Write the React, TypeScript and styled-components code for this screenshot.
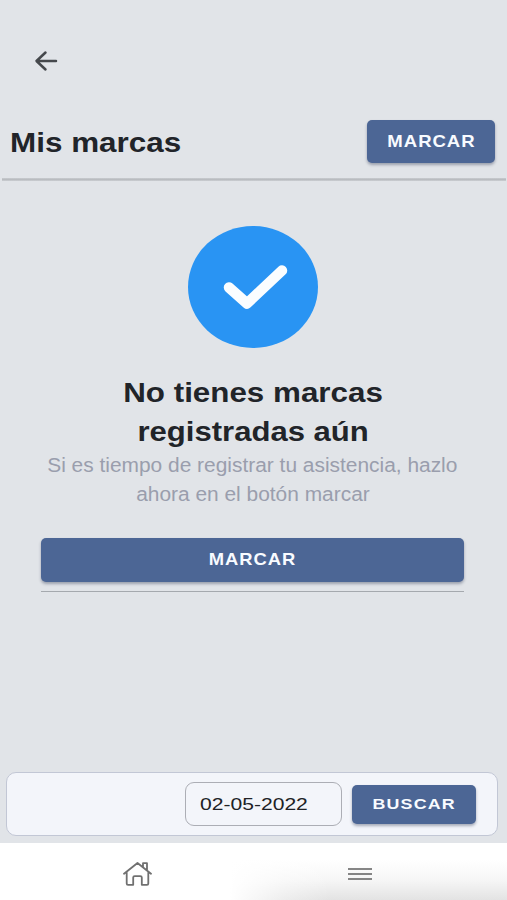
import React from 'react';
import styled, { createGlobalStyle } from 'styled-components';

const GlobalStyle = createGlobalStyle`
  * { box-sizing: border-box; }
  body {
    margin: 0;
    background: #e1e4e8;
    font-family: "Liberation Sans", Arial, sans-serif;
  }
`;

const Screen = styled.div`
  width: 507px;
  height: 900px;
  display: flex;
  flex-direction: column;
  overflow: hidden;
  background: #e1e4e8;
`;

const TopBar = styled.div`
  height: 106px;
  padding: 50px 0 0 34px;
`;

const BackButton = styled.button`
  display: block;
  padding: 0;
  border: 0;
  background: none;
  height: 22px;
`;

const Header = styled.header`
  height: 75px;
  margin: 0 1px 0 2px;
  padding: 0 11px 4px 8px;
  display: flex;
  align-items: center;
  justify-content: space-between;
  background: linear-gradient(#c9ccd0, #b9bcc0 50%, #cccfd3) bottom / 100% 3px no-repeat;
`;

const Wide = styled.span<{ $scale: number; $origin?: string }>`
  display: inline-block;
  white-space: nowrap;
  transform: scaleX(${(p) => p.$scale});
  transform-origin: ${(p) => p.$origin ?? 'center'};
`;

const Title = styled.h1`
  margin: 0;
  font-size: 28.5px;
  line-height: 40px;
  color: #212429;
`;

const Button = styled.button<{ $width: string; $height: number; $size: number; $spacing: number }>`
  display: flex;
  align-items: center;
  justify-content: center;
  width: ${(p) => p.$width};
  height: ${(p) => p.$height}px;
  flex-shrink: 0;
  padding: 0;
  border: 0;
  border-radius: 5px;
  background: #4c6695;
  color: #f8fbff;
  font: bold ${(p) => p.$size}px "Liberation Sans", Arial, sans-serif;
  letter-spacing: ${(p) => p.$spacing}px;
  box-shadow: 0 2px 3px rgba(40, 50, 80, 0.38);
`;

const Main = styled.main`
  flex: 1;
  display: flex;
  flex-direction: column;
  align-items: center;
  padding: 45px 43px 0 41px;
`;

const Heading = styled.h2`
  margin: 25px 0 0;
  padding-left: 1px;
  font-size: 28.5px;
  line-height: 39px;
  color: #212429;
  text-align: center;
`;

const Message = styled.p`
  margin: 0;
  font-size: 19.5px;
  line-height: 29px;
  color: #9a9ead;
  text-align: center;
`;

const Action = styled.div`
  width: 100%;
  margin-top: 29px;
  padding-bottom: 9px;
  border-bottom: 1px solid #a5a9ae;
`;

const SearchBar = styled.section`
  height: 64px;
  margin: 0 9px 7px 6px;
  padding-right: 21px;
  display: flex;
  align-items: center;
  justify-content: flex-end;
  gap: 10px;
  border: 1px solid #c2c7d5;
  border-radius: 10px;
  background: #f3f5fa;
`;

const DateField = styled.div`
  width: 157px;
  height: 44px;
  padding: 2px 0 0 14px;
  display: flex;
  align-items: center;
  border: 1px solid #acaeb5;
  border-radius: 9px;
  font-size: 17px;
  color: #202226;
`;

const BottomNav = styled.nav`
  height: 57px;
  flex-shrink: 0;
  padding: 0 36px 0 25px;
  display: grid;
  grid-template-columns: 1fr 1fr;
  justify-items: center;
  align-items: center;
  background:
    linear-gradient(to right, #fff 230px, rgba(255, 255, 255, 0.35) 285px, rgba(255, 255, 255, 0) 330px),
    linear-gradient(to bottom, #fff 30%, #f6f6f6 65%, #e3e3e3);
`;

const NavItem = styled.a`
  display: flex;
  padding-top: 4px;
`;

export default function App() {
  return (
    <>
      <GlobalStyle />
      <Screen>
        <TopBar>
          <BackButton aria-label="Volver">
            <svg width="24" height="22" viewBox="0 0 24 22" fill="none" stroke="#45484c" strokeWidth="2.5" strokeLinecap="round" strokeLinejoin="round">
              <path d="M11.5 2.5 2.5 11l9 8.5M3 11h19" />
            </svg>
          </BackButton>
        </TopBar>
        <Header>
          <Title><Wide $scale={1.103} $origin="left">Mis marcas</Wide></Title>
          <Button $width="128px" $height={43} $size={17} $spacing={0.9}>
            <Wide $scale={1.09}>MARCAR</Wide>
          </Button>
        </Header>
        <Main>
          <svg width="130" height="122" viewBox="0 0 130 122">
            <ellipse cx="65" cy="61" rx="65" ry="61" fill="#2994f3" />
            <path d="M41 61.5 59 77.5 94 44.5" fill="none" stroke="#fafdff" strokeWidth="10.5" strokeLinecap="round" strokeLinejoin="round" />
          </svg>
          <Heading>
            <Wide $scale={1.1}>No tienes marcas</Wide><br />
            <Wide $scale={1.09}>registradas aún</Wide>
          </Heading>
          <Message>
            <Wide $scale={1.072}>Si es tiempo de registrar tu asistencia, hazlo</Wide><br />
            <Wide $scale={1.072}>ahora en el botón marcar</Wide>
          </Message>
          <Action>
            <Button $width="100%" $height={44} $size={17} $spacing={0.9}>
              <Wide $scale={1.08}>MARCAR</Wide>
            </Button>
          </Action>
        </Main>
        <SearchBar>
          <DateField><Wide $scale={1.24} $origin="left">02-05-2022</Wide></DateField>
          <Button $width="124px" $height={39} $size={15.5} $spacing={1}>
            <Wide $scale={1.15}>BUSCAR</Wide>
          </Button>
        </SearchBar>
        <BottomNav>
          <NavItem aria-label="Inicio">
            <svg width="30" height="26" viewBox="-0.5 0 30 26" fill="none" stroke="#707070" strokeWidth="1.8" strokeLinejoin="round" strokeLinecap="round">
              <path d="M1.5 12.7 15 2l13.5 10.7M4.2 11v11.5q0 1.3 1.3 1.3h5.2v-7.2q0-1.5 1.5-1.5h5.6q1.5 0 1.5 1.5v7.2h5.2q1.3 0 1.3-1.3V11M20.5 6V2.2h4V9" />
            </svg>
          </NavItem>
          <NavItem aria-label="Menú">
            <svg width="24" height="14" viewBox="0 0 24 14" stroke="#858585" strokeWidth="2">
              <path d="M0 2h24M0 7h24M0 12h24" />
            </svg>
          </NavItem>
        </BottomNav>
      </Screen>
    </>
  );
}
